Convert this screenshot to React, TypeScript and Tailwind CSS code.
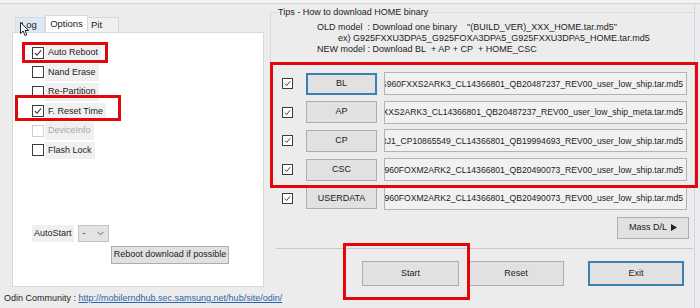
import { Fragment } from "react";

type FileRow = { label: string; file: string; focused?: boolean };

const fileRows: FileRow[] = [
  { label: "BL", file: "BL_G960FXXS2ARK3_CL14366801_QB20487237_REV00_user_low_ship.tar.md5", focused: true },
  { label: "AP", file: "AP_G960FXXS2ARK3_CL14366801_QB20487237_REV00_user_low_ship_meta.tar.md5" },
  { label: "CP", file: "CP_G960FXXS2ARJ1_CP10865549_CL14366801_QB19994693_REV00_user_low_ship.tar.md5" },
  { label: "CSC", file: "CSC_OXM_G960FOXM2ARK2_CL14366801_QB20490073_REV00_user_low_ship.tar.md5" },
  { label: "USERDATA", file: "HOME_CSC_OXM_G960FOXM2ARK2_CL14366801_QB20490073_REV00_user_low_ship.tar.md5" },
];

const options = [
  { label: "Auto Reboot", checked: true },
  { label: "Nand Erase", checked: false },
  { label: "Re-Partition", checked: false },
  { label: "F. Reset Time", checked: true },
  { label: "DeviceInfo", checked: false, disabled: true },
  { label: "Flash Lock", checked: false },
];

const CheckBox = ({ checked, disabled, size = 12 }: { checked: boolean; disabled?: boolean; size?: number }) => (
  <span
    className={`flex shrink-0 items-center justify-center border bg-white ${
      disabled ? "border-[#cfcfcf]" : "border-[#3b3b3b]"
    }`}
    style={{ width: size, height: size }}
  >
    {checked ? (
      <svg width={size - 4} height={size - 4} viewBox="0 0 10 10" fill="none">
        <path d="M1.2 5.2 L3.8 7.8 L8.8 1.8" stroke="#2a2a2a" strokeWidth="1.3" />
      </svg>
    ) : null}
  </span>
);

const RedBox = ({ className }: { className: string }) => (
  <div className={`pointer-events-none absolute border-[3px] border-[#e3060c] ${className}`} />
);

export default function App() {
  return (
    <div className="relative h-[308px] w-[700px] overflow-hidden bg-[#ececec] font-['Liberation_Sans',Arial,sans-serif] text-[9px] text-[#1c1c1c]">
      {/* window top edge */}
      <div className="h-[4px] border-b border-[#d6d6d6] bg-[#f3f3f3]" />

      <div className="flex h-[304px]">
        {/* left column */}
        <div className="flex w-[266px] shrink-0 flex-col pl-[4px]">
          <div className="ml-[8px] mt-[11px] flex h-[17px] items-end pl-[3px]">
            <div className="flex h-[15px] w-[30px] items-center border border-b-0 border-[#d3dbe3] bg-[#dce8f4] pl-[5px] text-[9.5px]">Log</div>
            <div className="flex h-[17px] w-[43px] items-center justify-center border border-b-0 border-[#d9d9d9] bg-white text-[9.5px]">Options</div>
            <div className="flex h-[15px] w-[31px] items-center border border-b-0 border-l-0 border-[#d9d9d9] bg-[#f0f0f0] pl-[3px] text-[9.5px]">Pit</div>
          </div>

          <div className="ml-[8px] flex h-[255px] w-[252px] flex-col border border-[#d9d9d9] bg-white pl-[19px] pt-[10px]">
            {options.map((o) => (
              <div key={o.label} className="flex h-[19.5px] items-center">
                <CheckBox checked={o.checked} disabled={o.disabled} />
                <span
                  className={`ml-[1px] whitespace-nowrap bg-[#f0f0f0] px-[3px] py-[2px] text-[9px] ${
                    o.disabled ? "text-[#a8a8a8]" : ""
                  }`}
                >
                  {o.label}
                </span>
              </div>
            ))}

            <div className="mt-auto flex items-center">
              <span className="flex h-[17px] items-center bg-[#f0f0f0] px-[2px] text-[9px]">AutoStart</span>
              <div className="ml-[4px] flex h-[17px] w-[31px] items-center justify-between border border-[#c2c2c2] bg-[#e3e3e3] px-[4px] text-[9px]">
                <span>-</span>
                <svg width="7" height="5" viewBox="0 0 7 5" fill="none">
                  <path d="M0.5 0.8 L3.5 3.8 L6.5 0.8" stroke="#555" strokeWidth="0.9" />
                </svg>
              </div>
            </div>
            <div className="mb-[22px] ml-[79px] mt-[4px] flex h-[18px] w-[118px] items-center justify-center whitespace-nowrap border border-[#adadad] bg-[#e1e1e1] text-[9px]">
              Reboot download if possible
            </div>
          </div>

          <div className="mt-[5px] flex items-center whitespace-nowrap text-[9px]">
            <span>Odin Community :&nbsp;</span>
            <span className="text-[#2a63a8] underline">http://mobilerndhub.sec.samsung.net/hub/site/odin/</span>
          </div>
        </div>

        {/* right column */}
        <div className="flex w-[428px] shrink-0 flex-col pl-[4px]">
          <div className="mt-[8px] h-[54px] border-l border-t border-[#dcdcdc]">
            <div className="ml-[6px] mt-[-6px] w-fit bg-[#ececec] px-[1px] text-[9px] leading-[11px]">Tips - How to download HOME binary</div>
            <div className="mt-[4px] pl-[46px] text-[9px] leading-[11px]">
              <div className="whitespace-nowrap">OLD model&nbsp; : Download one binary&nbsp;&nbsp;&nbsp; "(BUILD_VER)_XXX_HOME.tar.md5"</div>
              <div className="whitespace-nowrap pl-[21px]">ex) G925FXXU3DPA5_G925FOXA3DPA5_G925FXXU3DPA5_HOME.tar.md5</div>
              <div className="whitespace-nowrap">NEW model : Download BL&nbsp; + AP + CP&nbsp; + HOME_CSC</div>
            </div>
          </div>

          <div className="mt-[6px] flex flex-col gap-[5.7px]">
            {fileRows.map((r) => (
              <Fragment key={r.label}>
                <div className="flex h-[23px] items-center">
                  <div className="ml-[12px] w-[24px]">
                    <CheckBox checked size={11} />
                  </div>
                  <div
                    className={`flex h-[22px] w-[71px] items-center justify-center bg-[#e1e1e1] text-[9px] ${
                      r.focused ? "border-2 border-[#3c7fb1]" : "border border-[#adadad]"
                    }`}
                  >
                    {r.label}
                  </div>
                  <div className="relative ml-[7px] h-[23px] w-[303px] overflow-hidden border border-[#b3b3b3] bg-[#f1f1f1]">
                    <span className="absolute right-[3px] top-1/2 -translate-y-1/2 whitespace-nowrap text-[8.6px]">{r.file}</span>
                  </div>
                </div>
              </Fragment>
            ))}
          </div>

          <div className="mt-[7px] flex justify-end pr-[5px]">
            <div className="flex h-[22px] w-[72px] items-center justify-center gap-[4px] border border-[#adadad] bg-[#e1e1e1] text-[9px]">
              <span>Mass D/L</span>
              <svg width="6" height="7" viewBox="0 0 6 7">
                <path d="M0 0 L6 3.5 L0 7 Z" fill="#222" />
              </svg>
            </div>
          </div>

          <div className="ml-[6px] mr-[1px] mt-[9px] border-t border-[#c9c9c9]" />

          <div className="mt-[12px] flex h-[25px] items-stretch">
            <div className="ml-[92px] flex w-[97px] items-center justify-center border border-[#adadad] bg-[#e1e1e1] text-[9px]">Start</div>
            <div className="ml-[9px] flex w-[96px] items-center justify-center border border-[#adadad] bg-[#e1e1e1] text-[9px]">Reset</div>
            <div className="ml-[24px] flex w-[96px] items-center justify-center border-2 border-[#3c7fb1] bg-[#e1e1e1] text-[9px]">Exit</div>
          </div>
        </div>

        {/* window right edge */}
        <div className="w-[2px] shrink-0 border-l border-[#c6dbec] bg-[#e6eef5]" />
      </div>

      {/* mouse cursor over the Log tab */}
      <svg className="pointer-events-none absolute left-[20px] top-[22px]" width="11" height="15" viewBox="0 0 11 15">
        <path d="M0.5 0.5 L0.5 11.5 L3.2 9 L5 13.5 L6.8 12.8 L5 8.5 L8.8 8.5 Z" fill="#fff" stroke="#111" strokeWidth="0.9" />
      </svg>

      {/* red annotation boxes */}
      <RedBox className="left-[22px] top-[42px] h-[21px] w-[86px]" />
      <RedBox className="left-[15px] top-[95px] h-[26px] w-[106px]" />
      <RedBox className="left-[270px] top-[62px] h-[126px] w-[428px]" />
      <RedBox className="left-[343px] top-[243px] h-[57px] w-[127px]" />
    </div>
  );
}
